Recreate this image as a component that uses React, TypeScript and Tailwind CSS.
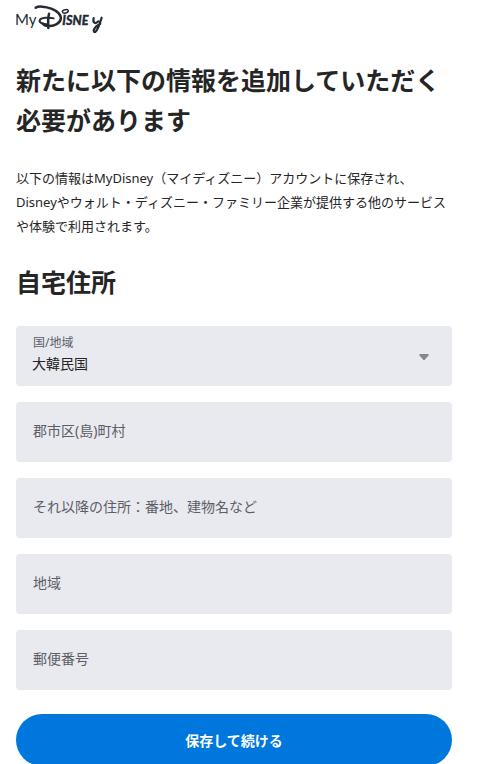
import { useState } from 'react'

type FieldProps = {
  id: string
  label: string
  value: string
  onChange: (value: string) => void
}

const FIELDS = [
  { id: 'city', label: '郡市区(島)町村' },
  { id: 'street', label: 'それ以降の住所：番地、建物名など' },
  { id: 'region', label: '地域' },
  { id: 'postal', label: '郵便番号' },
]

function Logo() {
  return (
    <svg
      viewBox="24 12 270 96"
      className="block h-8 w-[90px] text-[#252b33]"
      fill="none"
      stroke="currentColor"
      strokeLinecap="round"
      strokeLinejoin="round"
      role="img"
      aria-label="MyDisney"
    >
      <text x="21" y="76" fontSize="45" fontFamily="Lato, sans-serif" fill="currentColor" stroke="none">
        My
      </text>
      {/* castle arc, stem and the loop that crosses it */}
      <path
        d="M83 23 C90 18 112 19 130 26 C149 33 161 46 158 58 C155 71 138 78 121 78 C112 78 107 75 105 71"
        strokeWidth="7.5"
      />
      <path d="M123 41 C120 54 120 68 121 84" strokeWidth="7.5" />
      <path d="M137 55 C124 51 98 53 95 61 C93 68 103 72 116 73" strokeWidth="6" />
      <ellipse cx="172" cy="34" rx="9" ry="5" transform="rotate(-12 172 34)" strokeWidth="4.5" />
      <text
        x="163"
        y="76"
        fontSize="38"
        fontWeight="900"
        fontStyle="italic"
        fontFamily="Lato, sans-serif"
        fill="currentColor"
        strokeWidth="1"
      >
        ISNE
      </text>
      <path
        d="M257 54 C253 68 262 74 271 64 M281 53 C276 70 269 90 262 96 C254 97 254 83 277 71"
        strokeWidth="6.5"
      />
    </svg>
  )
}

function TextField({ id, label, value, onChange }: FieldProps) {
  return (
    <div className="relative">
      <label
        htmlFor={id}
        className={
          value
            ? 'pointer-events-none absolute top-[9px] left-[17px] text-xs leading-4 text-[#5c5d66]'
            : 'pointer-events-none absolute top-[18px] left-[17px] text-sm leading-[22px] text-[#5c5d66]'
        }
      >
        {label}
      </label>
      <input
        id={id}
        type="text"
        value={value}
        onChange={(e) => onChange(e.target.value)}
        className="block h-[60px] w-full rounded bg-[#e9eaf0] px-[17px] pt-4 text-sm text-[#252526] outline-none focus:ring-2 focus:ring-[#0077dd]"
      />
    </div>
  )
}

export default function App() {
  const [country, setCountry] = useState('KR')
  const [values, setValues] = useState<Record<string, string>>({})

  return (
    <main className="bg-white pt-1 pr-[29px] pl-4 font-['Noto_Sans','Noto_Sans_CJK_JP',sans-serif] text-[#252526]" lang="ja">
      <Logo />

      <h1 className="mt-6 text-[25px] leading-10 font-bold">新たに以下の情報を追加していただく必要があります</h1>
      <p className="mt-[26px] text-[13px] leading-6">
        以下の情報はMyDisney（マイディズニー）アカウントに保存され、Disneyやウォルト・ディズニー・ファミリー企業が提供する他のサービスや体験で利用されます。
      </p>
      <h2 className="mt-6 text-[25px] leading-10 font-bold">自宅住所</h2>

      <form className="mt-6 flex flex-col gap-4" onSubmit={(e) => e.preventDefault()}>
        <div className="relative">
          <label
            htmlFor="country"
            className="pointer-events-none absolute top-[9px] left-[17px] text-xs leading-4 text-[#5c5d66]"
          >
            国/地域
          </label>
          <select
            id="country"
            value={country}
            onChange={(e) => setCountry(e.target.value)}
            className="block h-[60px] w-full appearance-none rounded bg-[#e9eaf0] px-4 pt-4 text-sm text-[#252526] outline-none focus:ring-2 focus:ring-[#0077dd]"
          >
            <option value="KR">大韓民国</option>
            <option value="JP">日本</option>
          </select>
          <svg
            viewBox="0 0 10 6"
            className="pointer-events-none absolute top-7 right-[23px] h-1.5 w-2.5 text-[#85868c]"
            fill="currentColor"
            aria-hidden="true"
          >
            <path d="M0.5 0H9.5V1.5L5.5 6H4.5L0.5 1.5Z" />
          </svg>
        </div>

        {FIELDS.map((field) => (
          <TextField
            key={field.id}
            id={field.id}
            label={field.label}
            value={values[field.id] ?? ''}
            onChange={(value) => setValues({ ...values, [field.id]: value })}
          />
        ))}

        <button
          type="submit"
          className="mt-2 h-[52px] w-full rounded-full bg-[#0077dd] pt-0.5 text-sm font-bold text-white hover:bg-[#0068c2]"
        >
          保存して続ける
        </button>
      </form>
    </main>
  )
}
